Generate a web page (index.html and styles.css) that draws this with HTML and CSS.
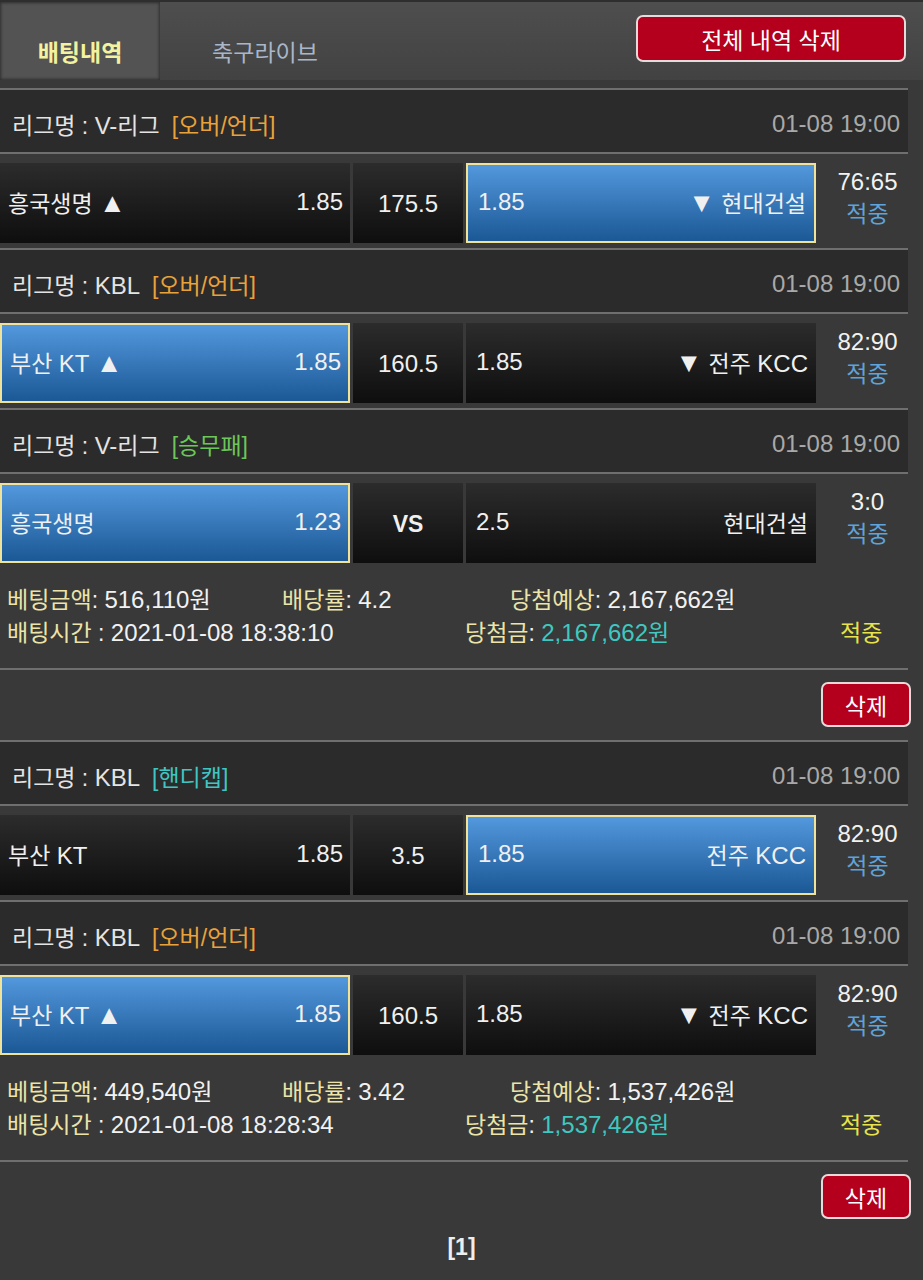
FILE: index.html
```html
<!DOCTYPE html>
<html lang="ko">
  <head>
    <meta charset="UTF-8" />
    <meta name="viewport" content="width=device-width, initial-scale=1.0" />
    <title>배팅내역</title>
    <link rel="stylesheet" href="styles.css">
  </head>
  <body>
    <div class="top">
      <div class="tabs">
        <a class="tab on">배팅내역</a>
        <a class="tab">축구라이브</a>
      </div>
      <button class="btn-red btn-all">전체 내역 삭제</button>
    </div>

    <div class="list">
      <!-- bet 1 -->
      <div class="league">
        <span>리그명 : <span class="n">V-</span>리그<em class="orange">[오버/언더]</em></span>
        <span class="date n">01-08 19:00</span>
      </div>
      <div class="game">
        <div class="cell home"><span>흥국생명 <span class="tri">▲</span></span><span class="n">1.85</span></div>
        <div class="cell mid n">175.5</div>
        <div class="cell away sel"><span class="n">1.85</span><span><span class="tri">▼</span> 현대건설</span></div>
        <div class="result"><b class="n">76:65</b><span>적중</span></div>
      </div>
      <div class="league">
        <span>리그명 : <span class="n">KBL</span><em class="orange">[오버/언더]</em></span>
        <span class="date n">01-08 19:00</span>
      </div>
      <div class="game">
        <div class="cell home sel"><span>부산 <span class="n">KT</span> <span class="tri">▲</span></span><span class="n">1.85</span></div>
        <div class="cell mid n">160.5</div>
        <div class="cell away"><span class="n">1.85</span><span><span class="tri">▼</span> 전주 <span class="n">KCC</span></span></div>
        <div class="result"><b class="n">82:90</b><span>적중</span></div>
      </div>
      <div class="league">
        <span>리그명 : <span class="n">V-</span>리그<em class="green">[승무패]</em></span>
        <span class="date n">01-08 19:00</span>
      </div>
      <div class="game">
        <div class="cell home sel"><span>흥국생명</span><span class="n">1.23</span></div>
        <div class="cell mid vs">VS</div>
        <div class="cell away"><span class="n">2.5</span><span>현대건설</span></div>
        <div class="result"><b class="n">3:0</b><span>적중</span></div>
      </div>
      <div class="info">
        <div class="info-line">
          <span class="c1"><i>베팅금액</i>: <span class="n">516,110</span>원</span>
          <span class="c2"><i>배당률</i>: <span class="n">4.2</span></span>
          <span><i>당첨예상</i>: <span class="n">2,167,662</span>원</span>
        </div>
        <div class="info-line">
          <span class="c3"><i>배팅시간</i> : <span class="n">2021-01-08 18:38:10</span></span>
          <span class="c4"><i>당첨금</i>: <b class="teal"><span class="n">2,167,662</span>원</b></span>
          <span class="hit">적중</span>
        </div>
      </div>
      <div class="del-row"><button class="btn-red btn-del">삭제</button></div>

      <!-- bet 2 -->
      <div class="league">
        <span>리그명 : <span class="n">KBL</span><em class="cyan">[핸디캡]</em></span>
        <span class="date n">01-08 19:00</span>
      </div>
      <div class="game">
        <div class="cell home"><span>부산 <span class="n">KT</span></span><span class="n">1.85</span></div>
        <div class="cell mid n">3.5</div>
        <div class="cell away sel"><span class="n">1.85</span><span>전주 <span class="n">KCC</span></span></div>
        <div class="result"><b class="n">82:90</b><span>적중</span></div>
      </div>
      <div class="league">
        <span>리그명 : <span class="n">KBL</span><em class="orange">[오버/언더]</em></span>
        <span class="date n">01-08 19:00</span>
      </div>
      <div class="game">
        <div class="cell home sel"><span>부산 <span class="n">KT</span> <span class="tri">▲</span></span><span class="n">1.85</span></div>
        <div class="cell mid n">160.5</div>
        <div class="cell away"><span class="n">1.85</span><span><span class="tri">▼</span> 전주 <span class="n">KCC</span></span></div>
        <div class="result"><b class="n">82:90</b><span>적중</span></div>
      </div>
      <div class="info">
        <div class="info-line">
          <span class="c1"><i>베팅금액</i>: <span class="n">449,540</span>원</span>
          <span class="c2"><i>배당률</i>: <span class="n">3.42</span></span>
          <span><i>당첨예상</i>: <span class="n">1,537,426</span>원</span>
        </div>
        <div class="info-line">
          <span class="c3"><i>배팅시간</i> : <span class="n">2021-01-08 18:28:34</span></span>
          <span class="c4"><i>당첨금</i>: <b class="teal"><span class="n">1,537,426</span>원</b></span>
          <span class="hit">적중</span>
        </div>
      </div>
      <div class="del-row"><button class="btn-red btn-del">삭제</button></div>
    </div>

    <div class="paging">[1]</div>
  </body>
</html>
```

FILE: styles.css
```css
html,
body {
  margin: 0;
  background-color: #393939;
  font-family: "Liberation Sans", "Noto Sans CJK KR", sans-serif;
  font-size: 23px;
  color: #eeeeee;
}

/* latin text and digits run a little larger than the hangul */
.n {
  font-size: 24px;
}
.tri {
  font-family: "Liberation Sans", "DejaVu Sans", sans-serif;
  font-size: 27px;
  line-height: 1;
}

.top {
  display: flex;
  justify-content: space-between;
  align-items: flex-start;
  height: 80px;
  background: linear-gradient(to bottom, #4e4e4e, #424242);
  border-top: 2px solid #2e2e2e;
  box-sizing: border-box;
}
.tabs {
  display: flex;
  height: 100%;
}
.tab {
  display: flex;
  align-items: center;
  justify-content: center;
  width: 160px;
  padding-top: 20px;
  box-sizing: border-box;
  color: #a9b6c9;
  font-size: 23px;
}
.tab + .tab {
  width: 210px;
}
.tab.on {
  background: #535353;
  color: #f3f29e;
  font-weight: bold;
  box-shadow: inset 0 0 3px 1px #2f2f2f;
}

.btn-red {
  background: #b4001c;
  color: #ffffff;
  border: 2px solid #e6dada;
  border-radius: 7px;
  font-family: inherit;
  font-size: 23px;
  cursor: pointer;
}
.btn-all {
  width: 270px;
  height: 47px;
  margin: 13px 17px 0 0;
  padding: 0;
}

.list {
  width: 908px;
  margin-top: 8px;
}

.league {
  display: flex;
  justify-content: space-between;
  align-items: center;
  height: 64px;
  padding: 5px 8px 0 12px;
  box-sizing: border-box;
  background: #2b2b2b;
  border-top: 2px solid #6f6f6f;
  color: #e4e4e4;
}
.league em {
  font-style: normal;
  margin-left: 12px;
}
.league .date {
  color: #a9a9a9;
}
.orange {
  color: #e9a23a;
}
.green {
  color: #6cc75a;
}
.cyan {
  color: #3fc6c4;
}

.game {
  display: flex;
  gap: 3px;
  height: 96px;
  padding: 9px 0 5px;
  box-sizing: border-box;
  border-top: 2px solid #6f6f6f;
}
.cell {
  display: flex;
  justify-content: space-between;
  align-items: center;
  height: 80px;
  padding-bottom: 3px;
  box-sizing: border-box;
  background: linear-gradient(to bottom, #2c2c2c, #0e0e0e);
  color: #f0f0f0;
}
.home {
  width: 350px;
  padding-left: 8px;
  padding-right: 7px;
}
.mid {
  width: 110px;
  justify-content: center;
  padding-top: 2px;
  padding-bottom: 0;
}
.mid.vs {
  font-weight: bold;
  font-size: 23px;
}
.away {
  width: 350px;
  padding-left: 10px;
  padding-right: 8px;
}
.cell.sel {
  background: linear-gradient(to bottom, #5398dd, #1b5895);
  border: 2px solid #efe39b;
}
.result {
  flex: 1;
  display: flex;
  flex-direction: column;
  align-items: center;
  padding: 2px 0 0 8px;
  line-height: 33px;
}
.result b {
  font-weight: normal;
  color: #f2f2f2;
}
.result span {
  color: #5ea3da;
}

.info {
  height: 100px;
  padding: 13px 0 0 7px;
  box-sizing: border-box;
}
.info-line {
  display: flex;
  height: 33px;
  align-items: center;
  color: #f2f2f2;
}
.info i {
  font-style: normal;
  color: #ece4a9;
}
.info b {
  font-weight: normal;
}
.c1 {
  width: 275px;
}
.c2 {
  width: 228px;
}
.c3 {
  width: 458px;
}
.c4 {
  width: 375px;
}
.teal {
  color: #3fc8c1;
}
.hit {
  color: #e9e24b;
}

.del-row {
  display: flex;
  justify-content: flex-end;
  height: 72px;
  padding-top: 12px;
  box-sizing: border-box;
  border-top: 2px solid #6f6f6f;
}
.btn-del {
  width: 90px;
  height: 45px;
  margin-right: -3px;
  padding: 0;
}

.paging {
  width: 923px;
  text-align: center;
  font-weight: bold;
  padding: 2px 0 30px;
}
```
